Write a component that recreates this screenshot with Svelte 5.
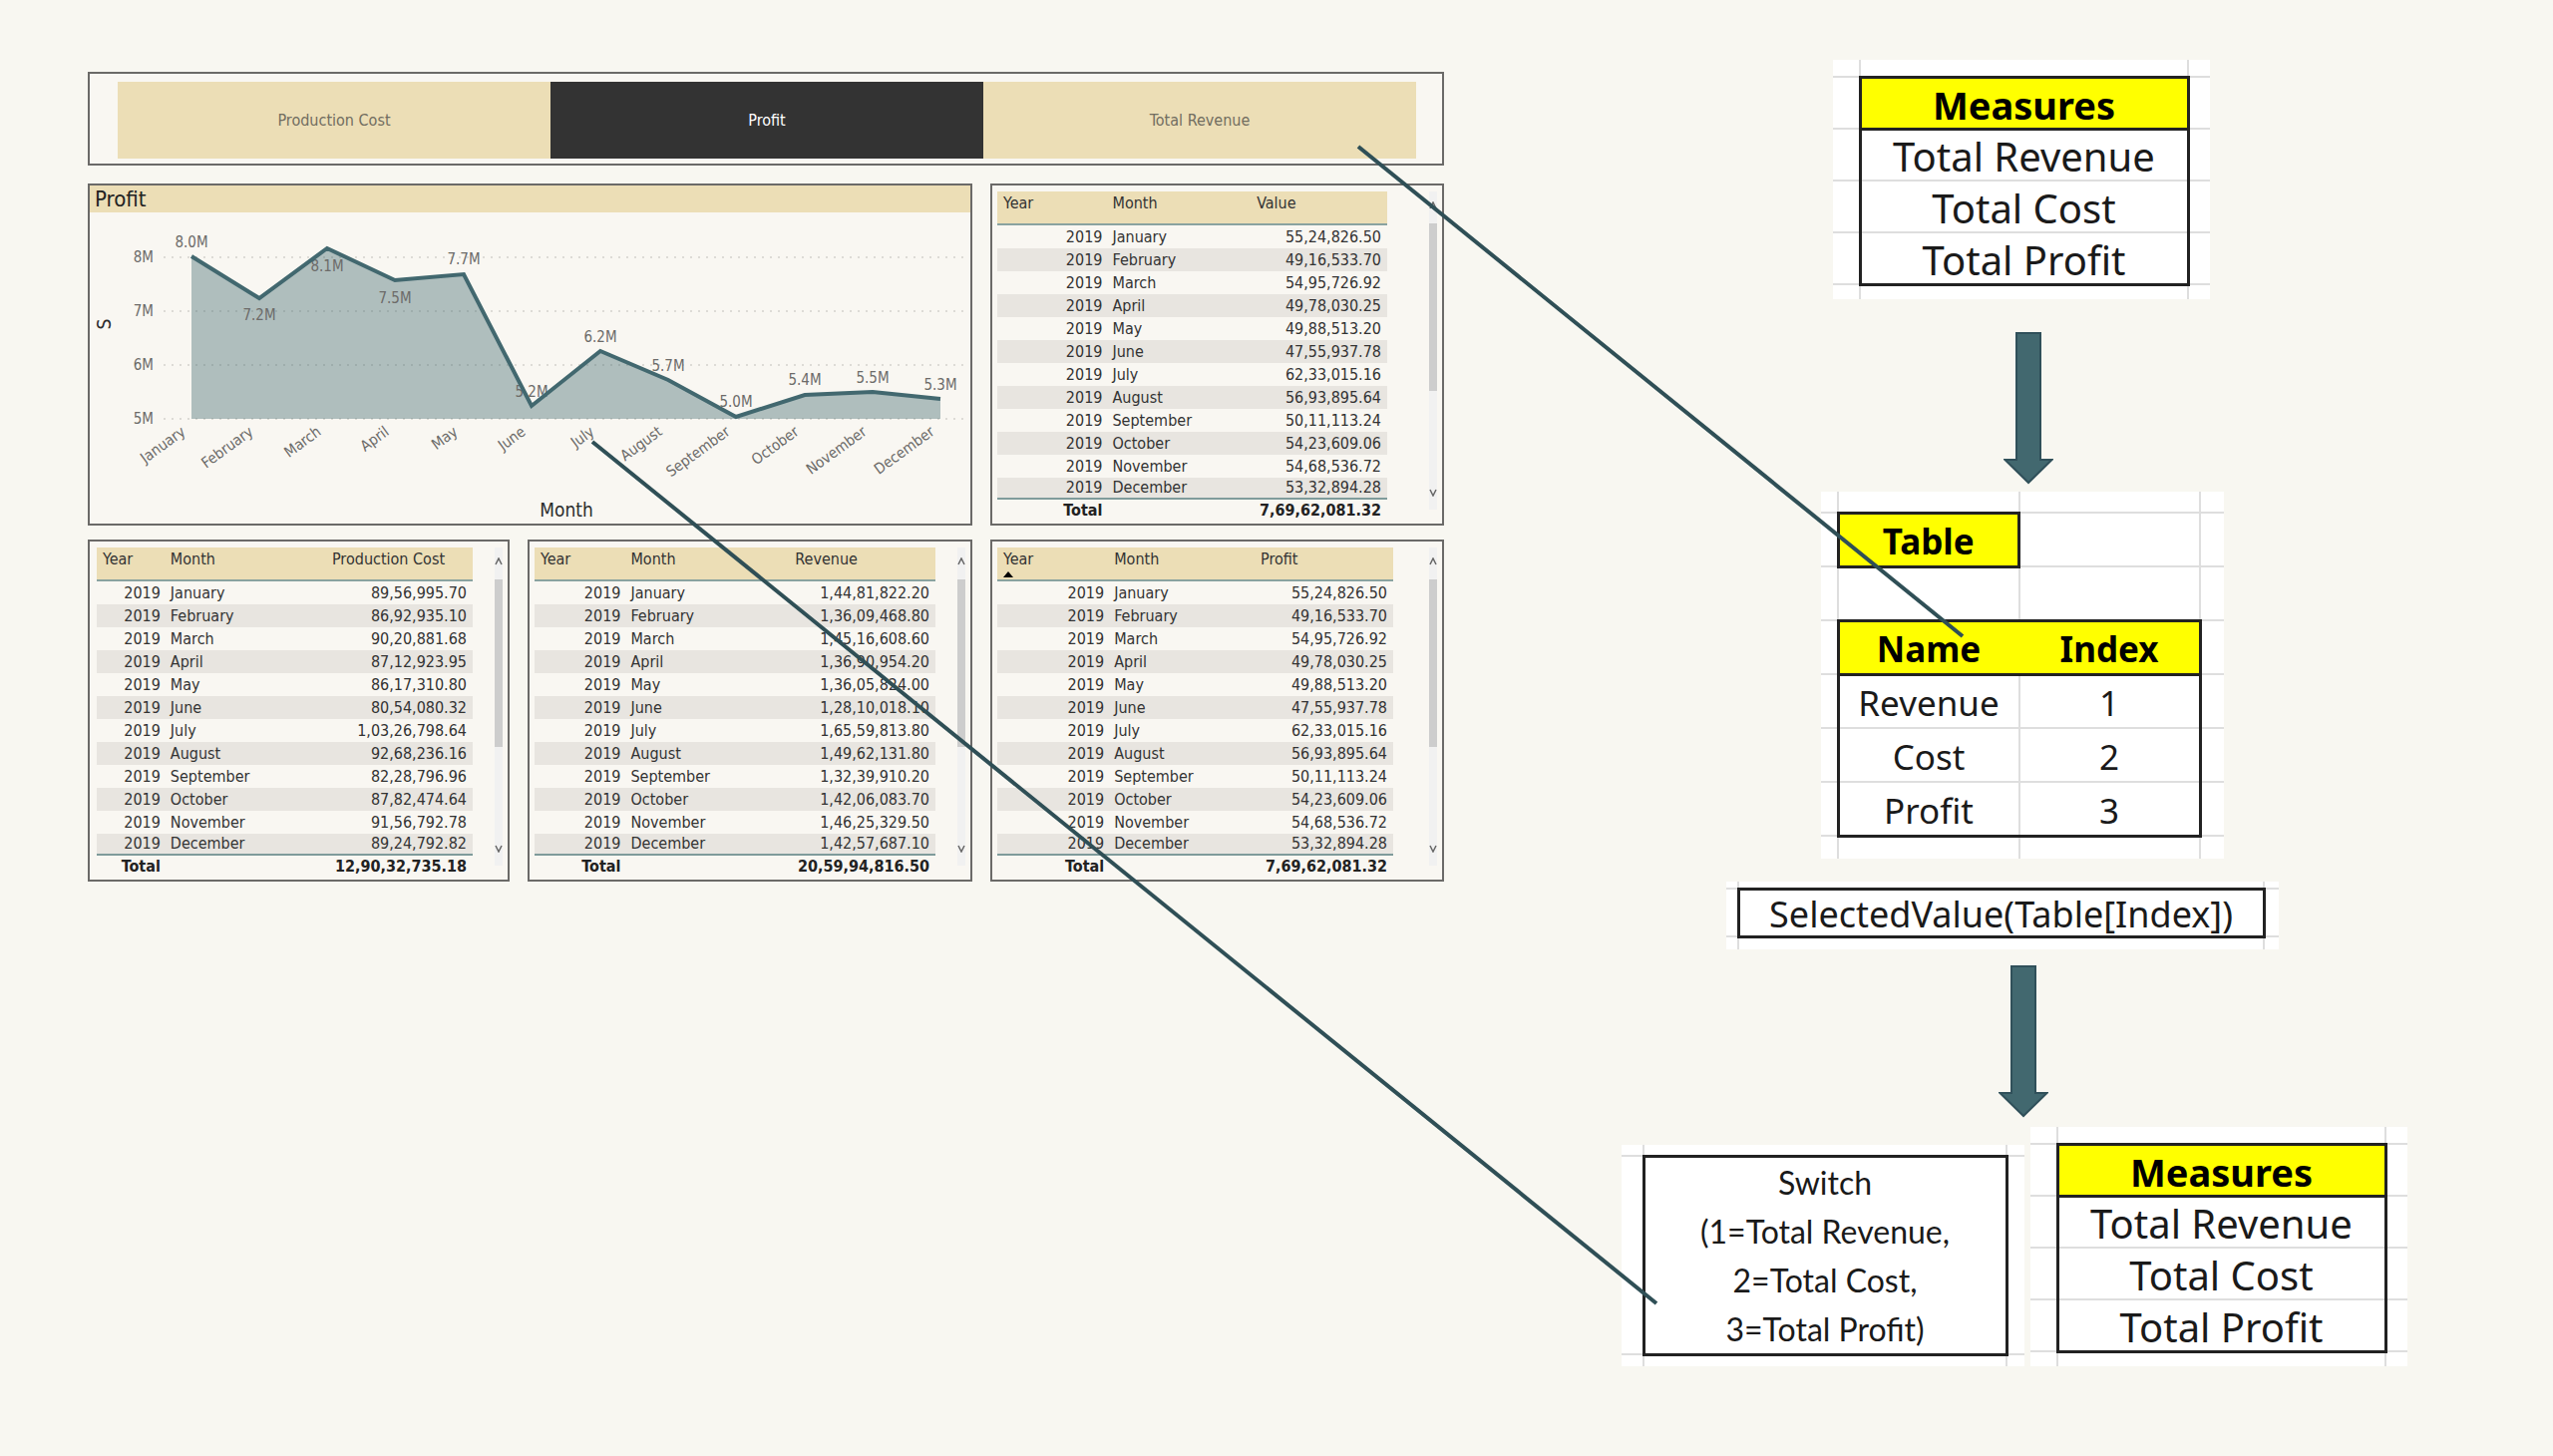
<script>
  const months = ['January', 'February', 'March', 'April', 'May', 'June', 'July', 'August', 'September', 'October', 'November', 'December'];
  const profit = ['55,24,826.50', '49,16,533.70', '54,95,726.92', '49,78,030.25', '49,88,513.20', '47,55,937.78', '62,33,015.16', '56,93,895.64', '50,11,113.24', '54,23,609.06', '54,68,536.72', '53,32,894.28'];
  const cost = ['89,56,995.70', '86,92,935.10', '90,20,881.68', '87,12,923.95', '86,17,310.80', '80,54,080.32', '1,03,26,798.64', '92,68,236.16', '82,28,796.96', '87,82,474.64', '91,56,792.78', '89,24,792.82'];
  const revenue = ['1,44,81,822.20', '1,36,09,468.80', '1,45,16,608.60', '1,36,90,954.20', '1,36,05,824.00', '1,28,10,018.10', '1,65,59,813.80', '1,49,62,131.80', '1,32,39,910.20', '1,42,06,083.70', '1,46,25,329.50', '1,42,57,687.10'];

  const valueGrid = { kind: 'value', head: 'Value', rows: profit, total: '7,69,62,081.32', cols: [28, 37, 35] };
  const lowerGrids = [
    { kind: 'cost', head: 'Production Cost', rows: cost, total: '12,90,32,735.18', cols: [18, 43, 39] },
    { kind: 'revenue', head: 'Revenue', rows: revenue, total: '20,59,94,816.50', cols: [22.5, 41, 36.5] },
    { kind: 'profit', head: 'Profit', rows: profit, total: '7,69,62,081.32', cols: [28, 37, 35], sorted: true }
  ];

  let selected = $state('Profit');
  const choices = ['Production Cost', 'Profit', 'Total Revenue'];

  // x, y of the point, then the label text and its baseline
  const points = [
    [192, 257, '8.0M', 248], [260, 299, '7.2M', 321], [328, 249, '8.1M', 272], [396, 281, '7.5M', 304],
    [465, 275, '7.7M', 265], [533, 407, '5.2M', 398], [602, 352, '6.2M', 343], [670, 381, '5.7M', 372],
    [738, 418, '5.0M', 408], [807, 396, '5.4M', 386], [875, 393, '5.5M', 384], [943, 400, '5.3M', 391]
  ];
  const line = points.map((p) => `${p[0]},${p[1]}`).join(' ');
  const area = `192,420 ${line} 943,420`;
  const ticks = [['8M', 258], ['7M', 312], ['6M', 366], ['5M', 420]];
</script>

{#snippet grid(g)}
  <section class="panel grid-panel {g.kind}">
    <table class="data">
      <colgroup>
        {#each g.cols as w}<col style="width: {w}%" />{/each}
      </colgroup>
      <thead>
        <tr>
          <th scope="col">Year{#if g.sorted}<svg class="sort" viewBox="0 0 10 6" aria-hidden="true"><path d="M0 6 5 0l5 6z" /></svg>{/if}</th>
          <th scope="col">Month</th>
          <th scope="col">{g.head}</th>
        </tr>
      </thead>
      <tbody>
        {#each g.rows as value, i}
          <tr><td>2019</td><td>{months[i]}</td><td>{value}</td></tr>
        {/each}
      </tbody>
      <tfoot>
        <tr><th scope="row">Total</th><td></td><td>{g.total}</td></tr>
      </tfoot>
    </table>
    <div class="scroll" aria-hidden="true">
      <svg viewBox="0 0 8 8"><path d="M1 7 4 1l3 6" /></svg>
      <span class="thumb"></span>
      <svg viewBox="0 0 8 8"><path d="M1 1l3 6 3-6" /></svg>
    </div>
  </section>
{/snippet}

{#snippet measures()}
  <table class="sheet measures">
    <colgroup><col class="left" /><col class="main" /><col class="right" /></colgroup>
    <tbody>
      <tr class="edge-top"><td></td><td></td><td></td></tr>
      <tr><td></td><th class="box-t box-b box-l box-r" scope="col">Measures</th><td></td></tr>
      <tr><td></td><td class="box-l box-r">Total Revenue</td><td></td></tr>
      <tr><td></td><td class="box-l box-r">Total Cost</td><td></td></tr>
      <tr><td></td><td class="box-l box-r box-b">Total Profit</td><td></td></tr>
      <tr class="edge-bottom"><td></td><td></td><td></td></tr>
    </tbody>
  </table>
{/snippet}

{#snippet arrow()}
  <svg class="arrow" viewBox="0 0 50 153" aria-hidden="true"><path d="M13 1h24v127h11.500L25 151 1.500 128H13z" /></svg>
{/snippet}

<main class="slide">
  <div class="dashboard">
    <div class="panel slicer" role="group" aria-label="Measure">
      {#each choices as c}
        <button type="button" class:active={selected === c} aria-pressed={selected === c} onclick={() => (selected = c)}>{c}</button>
      {/each}
    </div>

    <div class="row upper">
      <section class="panel chart">
        <h2>Profit</h2>
        <svg viewBox="90 213 883 312" role="img" aria-label="Profit by month">
          {#each ticks as [name, y]}
            <line class="gridline" x1="164" x2="971" y1={y} y2={y} />
            <text class="small end" x="154" y={y + 5}>{name}</text>
          {/each}
          <polygon class="area" points={area} />
          {#each points as [x, , name, y]}
            <text class="small mid" {x} {y}>{name}</text>
          {/each}
          <polyline class="trend" points={line} />
          {#each points as [x], i}
            <text class="small end" transform="translate({x - 5} 435) rotate(-36)">{months[i]}</text>
          {/each}
          <text class="axis mid" x="568" y="518">Month</text>
          <text class="axis mid" transform="translate(111 325) rotate(-90)">S</text>
        </svg>
      </section>
      {@render grid(valueGrid)}
    </div>

    <div class="row lower">
      {#each lowerGrids as g}{@render grid(g)}{/each}
    </div>
  </div>

  <div class="flow">
    <div class="step first">{@render measures()}</div>
    <div class="step down">{@render arrow()}</div>
    <div class="step second">
      <table class="sheet lookup">
        <colgroup><col class="left" /><col class="main" /><col class="main" /><col class="right" /></colgroup>
        <tbody>
          <tr class="edge-top"><td></td><td></td><td></td><td></td></tr>
          <tr><td></td><th class="box-t box-b box-l box-r" scope="col">Table</th><td></td><td></td></tr>
          <tr><td></td><td></td><td></td><td></td></tr>
          <tr><td></td><th class="box-t box-b box-l open" scope="col">Name</th><th class="box-t box-b box-r shut" scope="col">Index</th><td></td></tr>
          <tr><td></td><td class="box-l">Revenue</td><td class="box-r">1</td><td></td></tr>
          <tr><td></td><td class="box-l">Cost</td><td class="box-r">2</td><td></td></tr>
          <tr><td></td><td class="box-l box-b">Profit</td><td class="box-r box-b">3</td><td></td></tr>
          <tr class="edge-bottom"><td></td><td></td><td></td><td></td></tr>
        </tbody>
      </table>
    </div>
    <div class="step third">
      <table class="sheet formula">
        <colgroup><col class="left" /><col class="main" /><col class="right" /></colgroup>
        <tbody>
          <tr class="edge-top"><td></td><td></td><td></td></tr>
          <tr><td></td><td class="box-t box-b box-l box-r">SelectedValue(Table[Index])</td><td></td></tr>
          <tr class="edge-bottom"><td></td><td></td><td></td></tr>
        </tbody>
      </table>
    </div>
    <div class="step down">{@render arrow()}</div>
    <div class="result">
      <table class="sheet switch">
        <colgroup><col class="left" /><col class="main" /><col class="right" /></colgroup>
        <tbody>
          <tr class="edge-top"><td></td><td></td><td></td></tr>
          <tr><td></td><td class="box-t box-b box-l box-r">Switch<br />(1=Total Revenue,<br />2=Total Cost,<br />3=Total Profit)</td><td></td></tr>
          <tr class="edge-bottom"><td></td><td></td><td></td></tr>
        </tbody>
      </table>
      {@render measures()}
    </div>
  </div>

  <svg class="links" viewBox="0 0 2560 1460" preserveAspectRatio="none" aria-hidden="true">
    <line x1="1362" y1="147" x2="1968" y2="638" />
    <line x1="594" y1="443" x2="1661" y2="1307" />
  </svg>
</main>

<style>
  :global(body) {
    margin: 0;
    background: #f8f7f1;
  }
  .slide {
    position: relative;
    display: grid;
    grid-template-columns: 1360fr 788fr;
    column-gap: 178px;
    align-items: start;
    box-sizing: border-box;
    min-height: 100vh;
    padding: 60px 146px 80px 88px;
    font-family: 'DejaVu Sans Condensed', 'DejaVu Sans', sans-serif;
    font-size: 16px;
    color: #333;
  }
  .dashboard {
    padding-top: 12px;
  }
  .panel {
    box-sizing: border-box;
    border: 2px solid #6b6a68;
    background: #f9f7f2;
  }
  .slicer {
    display: flex;
    padding: 8px 26px 5px 28px;
    margin-bottom: 18px;
  }
  .slicer button {
    flex: 1;
    height: 77px;
    border: 0;
    background: #ecdeb6;
    color: #716d60;
    font: inherit;
  }
  .slicer button.active {
    background: #333;
    color: #fff;
  }
  .row {
    display: grid;
    column-gap: 18px;
  }
  .upper {
    grid-template-columns: 887fr 455fr;
    margin-bottom: 14px;
  }
  .lower {
    grid-template-columns: 423fr 446fr 455fr;
  }

  .chart h2 {
    margin: 0;
    padding-left: 5px;
    background: #ecdeb6;
    font-size: 22px;
    line-height: 27px;
    font-weight: 400;
    color: #222;
  }
  .chart svg {
    display: block;
    width: 100%;
  }
  .gridline {
    stroke: #dddbd6;
    stroke-width: 2;
    stroke-dasharray: 2 6;
  }
  .area {
    fill: #42686f;
    fill-opacity: 0.4;
  }
  .trend {
    fill: none;
    stroke: #42686f;
    stroke-width: 4;
  }
  .small {
    font-size: 15px;
    fill: #6c6b69;
  }
  .axis {
    font-size: 19px;
    fill: #2b2b2b;
  }
  .mid {
    text-anchor: middle;
  }
  .end {
    text-anchor: end;
  }

  .grid-panel {
    display: flex;
    align-items: flex-start;
    padding: 6px 5px 3px;
    gap: 42px;
  }
  .cost {
    gap: 22px;
    padding-left: 7px;
  }
  .revenue {
    gap: 22px;
  }
  .profit {
    gap: 36px;
  }
  .data {
    flex: 1;
    table-layout: fixed;
    border-spacing: 0;
    line-height: 20px;
  }
  .data th,
  .data td {
    height: 23px;
    padding: 0 6px;
    box-sizing: border-box;
    text-align: right;
    white-space: nowrap;
  }
  .data td:first-child,
  .data tfoot th {
    padding-right: 4px;
  }
  .data thead th {
    position: relative;
    height: 34px;
    padding-top: 2px;
    border-bottom: 2px solid #8aa3a0;
    background: #ecdeb6;
    font-weight: 400;
    text-align: left;
    vertical-align: top;
  }
  .data td:nth-child(2) {
    text-align: left;
  }
  .data tbody tr:nth-child(even) {
    background: #e8e5e0;
  }
  .data tbody tr:last-child td {
    height: 20px;
  }
  .data tfoot th,
  .data tfoot td {
    height: 23px;
    border-top: 2px solid #7f9b9b;
    font-weight: 700;
    color: #222;
  }
  .sort {
    position: absolute;
    left: 6px;
    bottom: 2px;
    width: 10px;
    height: 6px;
  }
  .scroll {
    display: flex;
    flex-direction: column;
    align-items: center;
    box-sizing: border-box;
    width: 8px;
    height: 319px;
    padding: 10px 0 13px;
    background: #f1f1f1;
  }
  .scroll svg {
    width: 8px;
    height: 8px;
    fill: none;
    stroke: #666;
    stroke-width: 1.5;
  }
  .scroll .thumb {
    width: 8px;
    height: 168px;
    margin: 14px 0 auto;
    background: #cdcdcd;
  }

  .step {
    display: flex;
  }
  .first {
    padding-left: 212px;
  }
  .second {
    padding-left: 200px;
  }
  .third {
    padding-left: 105px;
    padding-top: 23px;
  }
  .down {
    padding: 33px 0 7px 383px;
  }
  .third + .down {
    padding: 16px 0 9px 378px;
  }
  .arrow {
    width: 50px;
    height: 153px;
    fill: #42686f;
    stroke: #30505a;
    stroke-width: 2;
  }
  .result {
    display: flex;
    align-items: flex-end;
    justify-content: space-between;
  }

  .sheet {
    table-layout: fixed;
    border-collapse: collapse;
    background: #fff;
    color: #1a1a1a;
    font-family: 'Noto Sans', sans-serif;
    text-align: center;
  }
  .sheet th,
  .sheet td {
    height: 52px;
    padding: 4px 0 0;
    box-sizing: border-box;
    border: 2px solid #dedede;
    line-height: 40px;
    white-space: nowrap;
  }
  .sheet tr:first-child td {
    border-top: 0;
  }
  .sheet tr:last-child td {
    border-bottom: 0;
  }
  .sheet td:first-child {
    border-left: 0;
  }
  .sheet td:last-child {
    border-right: 0;
  }
  .sheet th {
    background: #ff0;
    color: #000;
    font-weight: 700;
  }
  .sheet .box-t {
    border-top: 3px solid #222;
  }
  .sheet .box-b {
    border-bottom: 3px solid #222;
  }
  .sheet .box-l {
    border-left: 3px solid #222;
  }
  .sheet .box-r {
    border-right: 3px solid #222;
  }
  .sheet .open {
    border-right-color: #ff0;
  }
  .sheet .shut {
    border-left-color: #ff0;
  }

  .measures {
    width: 378px;
    font-size: 40px;
  }
  .measures th {
    font-size: 38px;
  }
  .measures .left {
    width: 27px;
  }
  .measures .right {
    width: 22px;
  }
  .measures .edge-top td {
    height: 17px;
  }
  .measures .edge-bottom td {
    height: 15px;
  }

  .lookup {
    width: 404px;
    font-size: 35px;
  }
  .lookup th,
  .lookup td {
    height: 54px;
  }
  .lookup .left {
    width: 17px;
  }
  .lookup .right {
    width: 24px;
  }
  .lookup .edge-top td {
    height: 21px;
  }
  .lookup .edge-bottom td {
    height: 23px;
  }

  .formula {
    width: 554px;
    font-size: 36px;
  }
  .formula .left {
    width: 12px;
  }
  .formula .right {
    width: 15px;
  }
  .formula td {
    height: 48px;
  }
  .formula .edge-top td {
    height: 7px;
  }
  .formula .edge-bottom td {
    height: 13px;
  }

  .switch {
    width: 404px;
    font-family: Lato, sans-serif;
    font-size: 32px;
  }
  .switch .left {
    width: 22px;
  }
  .switch .right {
    width: 18px;
  }
  .switch td {
    padding: 0;
    line-height: 49px;
  }
  .switch .edge-top td {
    height: 11px;
  }
  .switch .edge-bottom td {
    height: 12px;
  }

  .links {
    position: absolute;
    inset: 0;
    width: 100%;
    height: 100%;
    pointer-events: none;
  }
  .links line {
    stroke: #2f4f56;
    stroke-width: 4;
  }
</style>
